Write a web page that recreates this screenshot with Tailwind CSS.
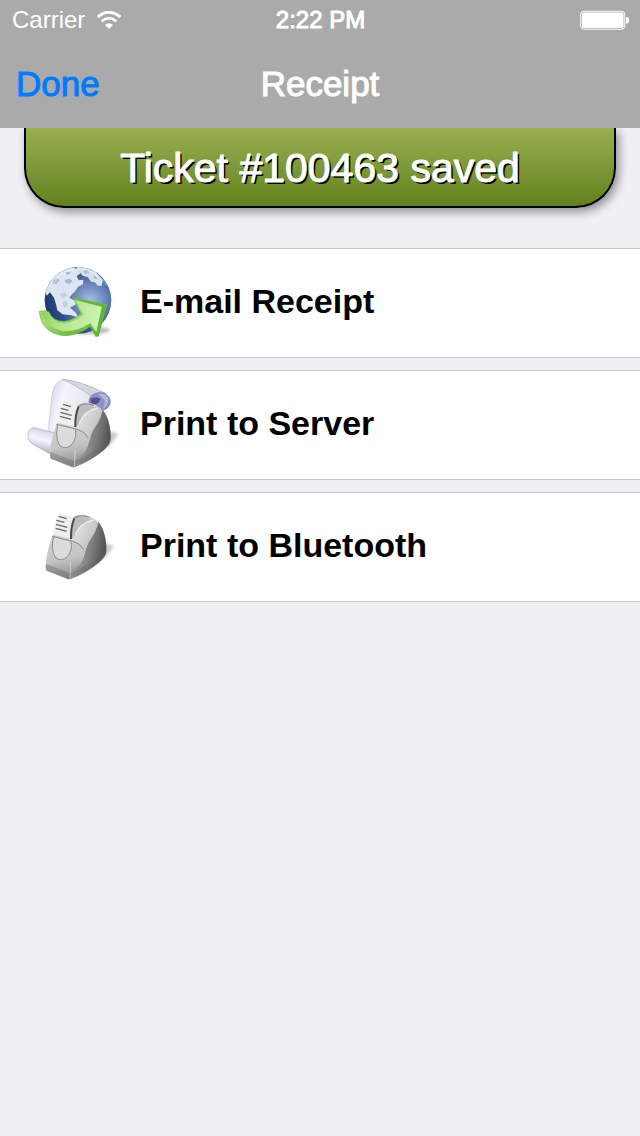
<!DOCTYPE html>
<html lang="en">

<head>
    <meta charset="UTF-8">
    <meta name="viewport" content="width=device-width, initial-scale=1.0">
    <title>Receipt</title>
    <script src="https://cdn.jsdelivr.net/npm/@tailwindcss/browser@4"></script>
</head>

<body class="min-h-screen bg-[#efeff4] font-['Liberation_Sans',Arial,sans-serif]">
    <header class="relative bg-[#aaaaaa] text-white">
        <!-- Status bar -->
        <div class="grid h-10 grid-cols-3 items-center pl-3 pr-[11px] text-[24px]">
            <div class="flex items-center gap-3">
                <span>Carrier</span>
                <svg class="h-[18px] w-6" viewBox="0 0 72 54" fill="none" stroke="#fff" aria-label="Wi-Fi" role="img">
                    <path d="M2 18 Q36 -11 70 18" stroke-width="9" />
                    <path d="M14 31 Q36 12 58 31" stroke-width="8" />
                    <path d="M24 42 Q36 31 48 42 L36 54 Z" fill="#fff" stroke="none" />
                </svg>
            </div>
            <span class="text-center [-webkit-text-stroke:1px]">2:22 PM</span>
            <svg class="h-5 w-[49px] justify-self-end" viewBox="0 0 49 20" aria-label="Battery full" role="img">
                <rect x="0.75" y="1.25" width="44" height="18" rx="3" fill="none" stroke="#fff" />
                <rect x="2" y="2.5" width="41.5" height="15.5" rx="1.5" fill="#fff" />
                <path d="M46 7h1q2 0 2 3.2t-2 3.3h-1z" fill="#fff" />
            </svg>
        </div>
        <!-- Navigation bar -->
        <div class="grid h-[88px] grid-cols-3 items-center px-4 text-[35px] [-webkit-text-stroke:1px]">
            <button type="button" class="justify-self-start text-[#007aff]">Done</button>
            <h1 class="text-center">Receipt</h1>
        </div>
    </header>

    <main>
        <div class="mx-6 flex h-20 items-center justify-center rounded-b-[40px] border-2 border-t-0 border-black bg-linear-to-b from-[#9bb050] to-[#62811b] shadow-[3px_4px_10px_rgba(0,0,0,0.4)] [clip-path:inset(0_-24px_-24px_-24px)]">
            <p role="status" class="pt-1 text-[41px] text-white [-webkit-text-stroke:1px] [text-shadow:2px_2px_0_#000]">Ticket #100463 saved</p>
        </div>

        <div class="mt-10 flex flex-col gap-3">
            <button type="button" class="flex h-[110px] w-full items-center gap-5 border-y border-[#c8c7cc] bg-white px-5 text-left text-[34px] font-bold text-black">
                <svg class="size-[100px] shrink-0" viewBox="0 0 100 100" aria-hidden="true">
                    <defs>
                        <radialGradient id="sea" cx="0.68" cy="0.5" r="0.66">
                            <stop offset="0" stop-color="#a9bfe2" />
                            <stop offset="0.35" stop-color="#6c88bd" />
                            <stop offset="0.72" stop-color="#2c4c8b" />
                            <stop offset="1" stop-color="#203a6e" />
                        </radialGradient>
                        <linearGradient id="arrow" x1="0" y1="0" x2="0.6" y2="1">
                            <stop offset="0" stop-color="#8fcf5e" />
                            <stop offset="0.5" stop-color="#a6de7a" />
                            <stop offset="1" stop-color="#62b532" />
                        </linearGradient>
                        <linearGradient id="arrowFace" x1="0" y1="0" x2="1" y2="0.2">
                            <stop offset="0" stop-color="#84ca55" />
                            <stop offset="0.45" stop-color="#b4e58d" />
                            <stop offset="1" stop-color="#cdf0ae" />
                        </linearGradient>
                        <filter id="soft" x="-20%" y="-50%" width="140%" height="200%">
                            <feGaussianBlur stdDeviation="5" />
                        </filter>
                        <clipPath id="globe"><circle cx="144" cy="136" r="100" /></clipPath>
                    </defs>
                    <g transform="translate(10 2) scale(0.33333)">
                        <ellipse cx="178" cy="226" rx="62" ry="12" fill="#000" opacity="0.25" filter="url(#soft)" />
                        <circle cx="144" cy="136" r="100" fill="url(#sea)" />
                        <g clip-path="url(#globe)">
                            <path d="M44 108 L54 82 L72 60 L96 43 L122 37 L143 42 L152 54 L140 64 L146 76 L160 74 L159 88 L144 95 L136 108 L124 120 L118 128 L132 136 L140 146 L120 158 L136 172 L146 188 L124 181 L98 178 L82 166 L78 148 L72 128 L60 112 L50 122 Z" fill="#dfe5f0" />
                            <path d="M68 78 l14 -9 7 6 -10 11 -10 3z M104 74 l16 -3 8 8 -10 8 -12 -4z M106 52 l12 -2 4 6 -12 3z" fill="#a9b9d6" />
                            <path d="M88 118 l18 -6 6 8 -14 10z M96 142 l14 -4 4 14 -12 6z" fill="#c3cfe3" />
                            <path d="M138 35 L168 38 L197 50 L218 75 L216 92 L203 92 L194 82 L183 80 L174 67 L158 62 L148 50 Z" fill="#d8e0ee" />
                            <path d="M159 47 l13 -1 6 8 -12 2z M190 62 l8 4 4 8 -10 -4z" fill="#a5b6d6" />
                        </g>
                        <path d="M66 99 Q84 48 142 40 Q199 43 231 92" fill="none" stroke="#fff" stroke-width="5" opacity="0.25" />
                        <path d="M28 169 Q44 164 57 171 Q68 200 103 199 Q130 195 153 176 L130 128 L230 149 L205 244 L197 244 L181 214 Q143 243 101 242 Q34 234 28 169 Z" fill="url(#arrow)" stroke="#68b93c" stroke-width="2" stroke-linejoin="round" />
                        <path d="M34 175 Q46 170 54 176 Q67 206 103 205 Q134 201 162 178 L135 133 L216 156 L199 232 L181 204 Q141 231 100 228 Q50 220 34 175 Z" fill="url(#arrowFace)" />
                        <path d="M216 154 L230 149 L205 244 L198 240 Z" fill="#62b435" />
                        <path d="M130 128 L230 149 L216 155 L136 135 Z" fill="#64b838" />
                    </g>
                </svg>
                <span class="pb-1">E-mail Receipt</span>
            </button>

            <button type="button" class="flex h-[110px] w-full items-center gap-5 border-y border-[#c8c7cc] bg-white px-5 text-left text-[34px] font-bold text-black">
                <svg class="size-[100px] shrink-0" viewBox="0 0 100 100" aria-hidden="true">
                    <defs>
                        <linearGradient id="sheet" x1="0" y1="0" x2="1" y2="0.35">
                            <stop offset="0" stop-color="#d0d0e6" />
                            <stop offset="0.3" stop-color="#f5f5fc" />
                            <stop offset="1" stop-color="#dadae8" />
                        </linearGradient>
                        <linearGradient id="roll" x1="0.35" y1="0" x2="0.1" y2="1">
                            <stop offset="0" stop-color="#d4d4ea" />
                            <stop offset="0.4" stop-color="#f5f5fe" />
                            <stop offset="1" stop-color="#8f8fbd" />
                        </linearGradient>
                    </defs>
                    <g transform="translate(0 -3) scale(0.33333)">
                        <path d="M128 22 Q99 33 95 78 L86 164 L96 236 L170 240 L220 105 Q199 91 213 71 Q221 61 260 66 Z" fill="url(#sheet)" stroke="#bcbcd0" stroke-width="2" />
                        <path d="M128 22 Q180 26 256 64 Q229 61 214 72 Q164 38 128 22Z" fill="#d6d6e2" stroke="#a6a6b6" stroke-width="2" />
                        <path d="M39 166 Q20 176 24 196 Q27 211 39 217 L96 249 L112 184 Q74 176 39 166 Z" fill="url(#roll)" stroke="#aaaacb" stroke-width="2" />
                        <ellipse cx="239" cy="89" rx="32" ry="27" fill="#8f8fc6" stroke="#6a6aa2" stroke-width="2" />
                        <path d="M212 80 Q229 73 241 80 Q239 91 229 97 L212 94 Z" fill="#50508f" />
                        <path d="M232 67 Q256 61 266 80 Q264 102 247 112 Q260 92 251 81 Q244 72 232 67Z" fill="#b4b4dc" />
                        <use href="#printer" transform="translate(43 33)" />
                    </g>
                </svg>
                <span class="pb-1">Print to Server</span>
            </button>

            <button type="button" class="flex h-[110px] w-full items-center gap-5 border-y border-[#c8c7cc] bg-white px-5 text-left text-[34px] font-bold text-black">
                <svg class="size-[100px] shrink-0" viewBox="0 0 100 100" aria-hidden="true">
                    <defs>
                        <linearGradient id="shell" x1="0" y1="0" x2="1" y2="0.5">
                            <stop offset="0" stop-color="#b8b8b8" />
                            <stop offset="0.5" stop-color="#dedede" />
                            <stop offset="1" stop-color="#b0b0b0" />
                        </linearGradient>
                        <linearGradient id="side" x1="0.1" y1="0.4" x2="1" y2="0.6">
                            <stop offset="0" stop-color="#a4a4a4" />
                            <stop offset="0.5" stop-color="#808080" />
                            <stop offset="1" stop-color="#4c4c4c" />
                        </linearGradient>
                        <linearGradient id="front" x1="0" y1="0" x2="0.2" y2="1">
                            <stop offset="0" stop-color="#d2d2d2" />
                            <stop offset="0.6" stop-color="#c4c4c4" />
                            <stop offset="1" stop-color="#949494" />
                        </linearGradient>
                        <!-- Receipt printer, shared by both print rows -->
                        <g id="printer">
                            <path d="M150 239 L221 143 L252 152 L228 187 Z" fill="#000" opacity="0.2" filter="url(#soft)" />
                            <path d="M128 66 Q142 55 166 60 Q200 68 217 100 Q229 126 229 165 Q229 184 206 203 Q168 234 122 252 Q116 254 110 251 L52 228 Q46 225 47 216 Q50 168 68 121 Z" fill="url(#shell)" />
                            <path d="M205 80 Q220 98 226 130 Q230 150 229 168 Q228 184 206 203 Q168 234 121 252 L122 224 Q158 212 164 178 Q170 150 184 130 Q200 106 205 80 Z" fill="url(#side)" />
                            <path d="M68 122 L120 134 Q152 142 163 164 Q163 207 122 226 L121 252 Q116 254 110 251 L52 228 Q46 225 47 216 Q50 168 68 122 Z" fill="url(#front)" />
                            <path d="M48 206 L119 234 Q184 208 229 168 Q228 184 206 203 Q168 234 121 252 L52 228 Q46 225 48 206 Z" fill="#606060" opacity="0.35" />
                            <path d="M70 126 Q62 166 76 187 Q94 203 113 184 Q128 166 123 140" fill="#dcdcdc" stroke="#8c8c8c" stroke-width="3" />
                            <path d="M66 124 L121 137 Q149 143 161 164" fill="none" stroke="#8a8a8a" stroke-width="3" />
                            <path d="M130 68 Q146 59 186 74 Q150 86 136 118 L124 134 Z" fill="#bdbdbd" />
                            <path d="M136 120 Q149 84 190 75" fill="none" stroke="#ededed" stroke-width="4" />
                            <path d="M134 68 Q150 58 178 67" fill="none" stroke="#8c8c8c" stroke-width="4" />
                            <path d="M133 70 Q122 96 123 132" fill="none" stroke="#4c4c4c" stroke-width="6" />
                            <path d="M87 52 L130 67 Q117 94 119 130 L70 120 Q72 84 87 52 Z" fill="#efefef" />
                            <path d="M86 64 L110 71 M79 76 L103 82 M78 88 L112 97 M77 100 L110 109" fill="none" stroke="#6a6a6a" stroke-width="4" />
                            <path d="M122 200 L120 250" stroke="#e7e7e7" stroke-width="3" opacity="0.6" />
                        </g>
                    </defs>
                    <g transform="translate(10 -2) scale(0.33333)">
                        <use href="#printer" />
                    </g>
                </svg>
                <span class="pb-1">Print to Bluetooth</span>
            </button>
        </div>
    </main>
</body>

</html>
